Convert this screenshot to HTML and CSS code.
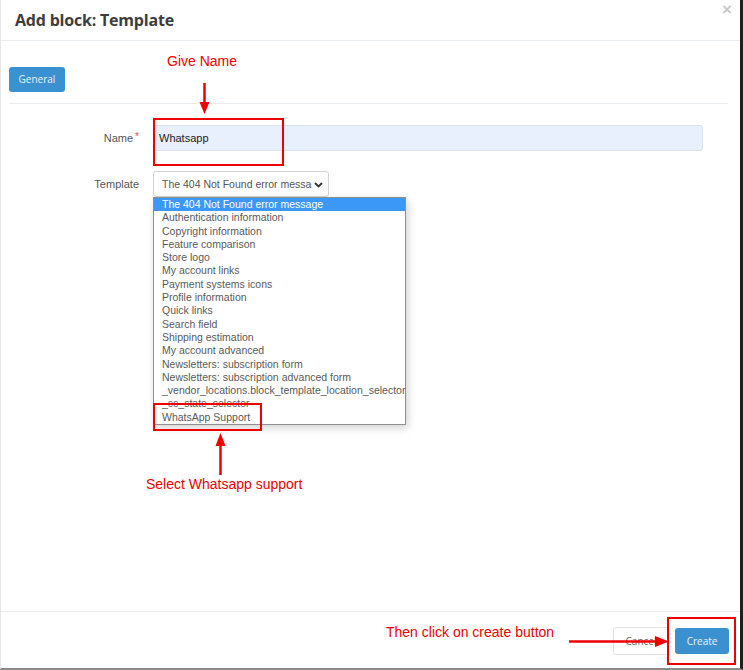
FILE: index.html
```html
<!DOCTYPE html>
<html>
<head>
<meta charset="utf-8">
<link rel="stylesheet" href="styles.css">
</head>
<body>
<div class="modal">
  <div class="modal-header">
    <h3 class="title">Add block: Template</h3>
    <span class="close">&times;</span>
  </div>
  <div class="modal-body">
    <div class="tabs">
      <span class="tab">General</span>
    </div>
    <div class="form">
      <div class="row">
        <label class="label">Name<span class="req">*</span></label>
        <div class="input">Whatsapp</div>
      </div>
      <div class="row">
        <label class="label">Template</label>
        <div class="field">
          <div class="select">
            <span class="select-text">The 404 Not Found error message</span>
            <svg class="chev" width="9" height="6" viewBox="0 0 9 6"><path d="M1 1 L4.5 4.5 L8 1" fill="none" stroke="#333" stroke-width="1.8"/></svg>
          </div>
          <ul class="list">
            <li class="sel">The 404 Not Found error message</li>
            <li>Authentication information</li>
            <li>Copyright information</li>
            <li>Feature comparison</li>
            <li>Store logo</li>
            <li>My account links</li>
            <li>Payment systems icons</li>
            <li>Profile information</li>
            <li>Quick links</li>
            <li>Search field</li>
            <li>Shipping estimation</li>
            <li>My account advanced</li>
            <li>Newsletters: subscription form</li>
            <li>Newsletters: subscription advanced form</li>
            <li>_vendor_locations.block_template_location_selector</li>
            <li>_cc_state_selector</li>
            <li>WhatsApp Support</li>
          </ul>
        </div>
      </div>
    </div>
  </div>
  <div class="modal-footer">
    <span class="btn btn-cancel">Cancel</span>
    <span class="btn btn-create">Create</span>
  </div>

  <div class="note note-name">Give Name</div>
  <div class="note note-select">Select Whatsapp support</div>
  <div class="note note-create">Then click on create button</div>
  <div class="box box-name"></div>
  <div class="box box-wa"></div>
  <div class="box box-create"></div>
  <svg class="arrows" width="743" height="670" viewBox="0 0 743 670">
    <g fill="#ee0000" stroke="#ee0000">
      <line x1="203.5" y1="83" x2="203.5" y2="103" stroke-width="2.5"/>
      <polygon points="198.5,102 208.5,102 203.5,114" stroke="none"/>
      <line x1="219.5" y1="475" x2="219.5" y2="444" stroke-width="2.5"/>
      <polygon points="214.5,446 224.5,446 219.5,433" stroke="none"/>
      <line x1="568" y1="641.5" x2="656" y2="641.5" stroke-width="2.5"/>
      <polygon points="654,636 654,647 668,641.5" stroke="none"/>
    </g>
  </svg>
</div>
</body>
</html>
```
FILE: styles.css
```css
html, body {
  margin: 0;
  padding: 0;
  background: #fff;
}
body {
  font-family: "Liberation Sans", Arial, sans-serif;
  color: #333;
}
.modal {
  position: relative;
  width: 739px;
  height: 668px;
  border-left: 1px solid #e6e6e6;
  border-right: 3px solid #1f1f1f;
  border-bottom: 2px solid #8a8a8a;
  display: flex;
  flex-direction: column;
  overflow: hidden;
}
.modal-header {
  height: 40px;
  border-bottom: 1px solid #e8ebee;
  display: flex;
  align-items: flex-start;
  justify-content: space-between;
  padding: 0 8px 0 14px;
  flex: none;
}
.title {
  margin: 9px 0 0;
  font-family: "Open Sans", "Liberation Sans", sans-serif;
  font-size: 16px;
  font-weight: 700;
  color: #3d3d3d;
  letter-spacing: -0.2px;
}
.close {
  font-size: 17px;
  font-weight: 700;
  line-height: 20px;
  color: #c8c8c8;
}
.modal-body {
  flex: 1;
  padding: 26px 12px 0 8px;
}
.tabs {
  border-bottom: 1px solid #e8ebee;
  padding-bottom: 11px;
}
.tab {
  display: inline-block;
  width: 56px;
  height: 25px;
  line-height: 25px;
  text-align: center;
  background: #3b91d0;
  color: #e8f2fa;
  border-radius: 3px;
  font-family: "Open Sans", "Liberation Sans", sans-serif;
  font-size: 10px;
}
.form {
  padding-top: 21px;
}
.row {
  display: flex;
  align-items: flex-start;
  margin-bottom: 19px;
}
.label {
  width: 130px;
  text-align: right;
  font-size: 11px;
  color: #555;
  line-height: 26px;
  margin-right: 14px;
  flex: none;
}
.req {
  color: #d9534f;
  margin-left: 2px;
  position: relative;
  top: -2px;
  font-size: 10px;
}
.input {
  width: 543px;
  height: 24px;
  line-height: 24px;
  background: #e8f0fd;
  border: 1px solid #dde4ec;
  border-radius: 2px;
  padding-left: 5px;
  font-size: 11px;
  color: #222;
}
.field {
  position: relative;
}
.select {
  width: 166px;
  height: 24px;
  border: 1px solid #d4d4d4;
  border-radius: 3px;
  background: #fff;
  display: flex;
  align-items: center;
  padding-left: 8px;
  position: relative;
  overflow: hidden;
}
.select-text {
  font-size: 10.5px;
  color: #555;
  white-space: nowrap;
  overflow: hidden;
  width: 150px;
}
.chev {
  position: absolute;
  right: 5px;
  top: 10px;
}
.list {
  position: absolute;
  left: 0;
  top: 26px;
  width: 251px;
  margin: 0;
  padding: 0;
  list-style: none;
  background: #fff;
  border: 1px solid #8f8f8f;
  box-shadow: 2px 3px 8px rgba(0,0,0,0.18);
  z-index: 2;
}
.list li {
  height: 13.3px;
  line-height: 13px;
  font-size: 10.5px;
  color: #5a5a5a;
  padding-left: 8px;
  white-space: nowrap;
}
.list li.sel {
  background: #3b98f6;
  color: #fff;
}
.modal-footer {
  flex: none;
  box-sizing: border-box;
  height: 57px;
  border-top: 1px solid #e8ebee;
  display: flex;
  justify-content: flex-end;
  align-items: flex-start;
  padding: 15px 11px 0 0;
  gap: 6px;
}
.btn {
  display: inline-block;
  font-family: "Open Sans", "Liberation Sans", sans-serif;
  font-size: 10px;
  border-radius: 3px;
  text-align: center;
  box-sizing: border-box;
}
.btn-cancel {
  width: 56px;
  height: 28px;
  line-height: 26px;
  border: 1px solid #dfe3e6;
  color: #666;
  background: #fff;
}
.btn-create {
  width: 54px;
  height: 26px;
  line-height: 26px;
  margin-top: 1px;
  background: #3b91d0;
  color: #e8f2fa;
}
.note {
  position: absolute;
  font-size: 14px;
  color: #ee0000;
  white-space: nowrap;
  z-index: 5;
}
.note-name { left: 166px; top: 53px; }
.note-select { left: 145px; top: 476px; }
.note-create { left: 385px; top: 624px; }
.box {
  position: absolute;
  border: 2px solid #ee0000;
  z-index: 5;
}
.box-name { left: 152px; top: 118px; width: 127px; height: 44px; }
.box-wa { left: 152px; top: 403px; width: 105px; height: 24px; }
.box-create { left: 666px; top: 617px; width: 65px; height: 44px; }
.arrows {
  position: absolute;
  left: 0;
  top: 0;
  z-index: 6;
  pointer-events: none;
}
```
